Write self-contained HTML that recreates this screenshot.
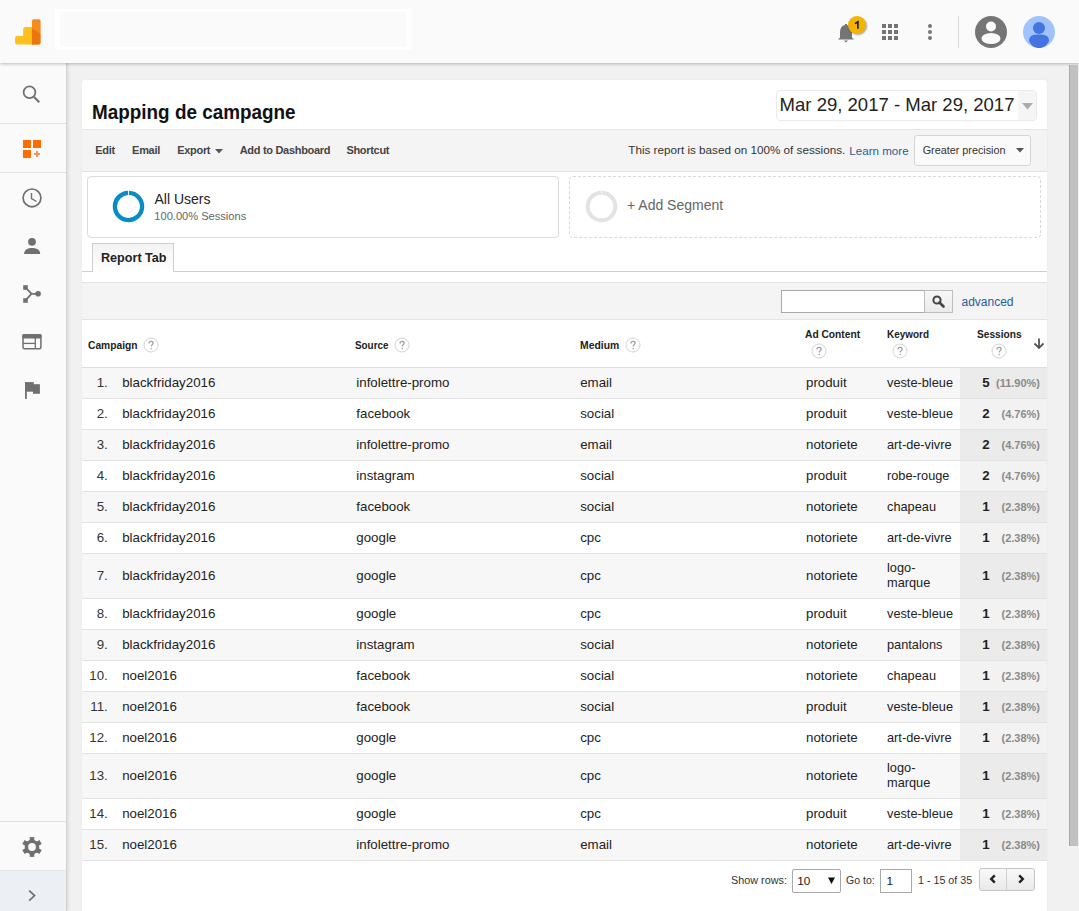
<!DOCTYPE html>
<html><head><meta charset="utf-8">
<style>
*{box-sizing:border-box;margin:0;padding:0}
html,body{width:1079px;height:911px;overflow:hidden;background:#f1f1f1;font-family:"Liberation Sans",sans-serif;color:#222}
.a{position:absolute}
#hdr{left:0;top:0;width:1079px;height:63px;background:#fafafa;box-shadow:0 1px 3px rgba(0,0,0,.25);z-index:5}
#side{left:0;top:63px;width:67px;height:848px;background:#fafafa;border-right:1px solid #d4d4d4;box-shadow:1px 0 3px rgba(0,0,0,.12);z-index:4}
#panel{left:82px;top:80px;width:965px;height:840px;background:#fff;border-radius:2px;box-shadow:0 0 1px rgba(0,0,0,.15)}
#sb{left:1069px;top:65px;width:9px;height:781px;background:#c1c1c1;border-left:1px solid #a9a9a9;z-index:6}
.t{position:absolute;white-space:nowrap}
</style></head><body>
<!-- HEADER -->
<div id="hdr" class="a">
  <svg class="a" style="left:15px;top:19px" width="26" height="26" viewBox="0 0 26 26">
    <defs><clipPath id="tb"><path d="M18.9 0.3 H23.6 Q25.6 0.3 25.6 2.3 V23.6 Q25.6 25.6 23.6 25.6 H16.9 V2.3 Q16.9 0.3 18.9 0.3Z"/></clipPath></defs>
    <path d="M2.1 16.9 H8.2 V10 Q8.2 8 10.2 8 H18 V25.6 H2.1 Q0.1 25.6 0.1 23.6 V18.9 Q0.1 16.9 2.1 16.9 Z" fill="#fdc01c"/>
    <g clip-path="url(#tb)"><rect x="16" y="0" width="11" height="27" fill="#f68b1f"/><path d="M16.9 9.2 L25.6 14.8 V26 H16.9Z" fill="#ec750f"/></g>
  </svg>
  <div class="a" style="left:55px;top:9px;width:356px;height:41px;background:#fff"></div>
  <div class="a" style="left:60px;top:12px;width:346px;height:35px;background:#fafafa"></div>

  <!-- bell -->
  <svg class="a" style="left:835px;top:20px" width="22" height="24" viewBox="0 0 22 24">
    <path d="M3 19.5 L5 17.5 V12 C5 8.3 7 5.8 10 5.1 V4 H12 V5.1 C15 5.8 17 8.3 17 12 V17.5 L19 19.5 Z" fill="#757575"/>
    <path d="M9 20.5 H13 L11 22.5 Z" fill="#757575"/>
  </svg>
  <div class="a" style="left:848px;top:16px;width:18px;height:18px;border-radius:50%;background:#f4b400;box-shadow:1px 1px 2px rgba(0,0,0,.35)"><svg class="a" style="left:0;top:0" width="18" height="18" viewBox="0 0 18 18"><path d="M7 7.6 L9.9 5.8 V12.8" fill="none" stroke="#222" stroke-width="1.7"/></svg></div>
  <!-- apps grid -->
  <svg class="a" style="left:882px;top:24px" width="16" height="16" viewBox="0 0 16 16" fill="#757575">
    <rect x="0" y="0" width="4" height="4"/><rect x="6" y="0" width="4" height="4"/><rect x="12" y="0" width="4" height="4"/>
    <rect x="0" y="6" width="4" height="4"/><rect x="6" y="6" width="4" height="4"/><rect x="12" y="6" width="4" height="4"/>
    <rect x="0" y="12" width="4" height="4"/><rect x="6" y="12" width="4" height="4"/><rect x="12" y="12" width="4" height="4"/>
  </svg>
  <!-- more vert -->
  <svg class="a" style="left:926px;top:22px" width="8" height="20" viewBox="0 0 8 20" fill="#757575">
    <circle cx="4" cy="4" r="2"/><circle cx="4" cy="10" r="2"/><circle cx="4" cy="16" r="2"/>
  </svg>
  <div class="a" style="left:958px;top:16px;width:1px;height:32px;background:#dadada"></div>
  <!-- gray avatar -->
  <svg class="a" style="left:975px;top:16px" width="32" height="32" viewBox="0 0 32 32">
    <circle cx="16" cy="16" r="16" fill="#757575"/>
    <circle cx="16" cy="10.5" r="5" fill="#fafafa"/>
    <ellipse cx="16" cy="22.5" rx="9.5" ry="5.5" fill="#fafafa"/>
  </svg>
  <!-- blue avatar -->
  <svg class="a" style="left:1023px;top:16px" width="32" height="32" viewBox="0 0 32 32">
    <circle cx="16" cy="16" r="16" fill="#a0c3ff"/>
    <circle cx="16" cy="12" r="6" fill="#4374e0"/>
    <path d="M6 25 C6 19.5 10 18.5 16 18.5 C22 18.5 26 19.5 26 25 C23.5 30 20 32 16 32 C12 32 8.5 30 6 25Z" fill="#4374e0"/>
  </svg>
</div>
<!-- SIDEBAR -->
<div id="side" class="a"></div>
<div class="a" style="left:0;top:123px;width:66px;height:1px;background:#e3e3e3;z-index:6"></div>
<div class="a" style="left:0;top:172px;width:66px;height:1px;background:#e3e3e3;z-index:6"></div>
<div class="a" style="left:0;top:821px;width:66px;height:1px;background:#e3e3e3;z-index:6"></div>
<div class="a" style="left:0;top:870px;width:66px;height:41px;background:#eceff3;border-top:1px solid #e3e3e3;z-index:6"></div>
<svg class="a" style="left:0;top:63px;z-index:7" width="66" height="848" viewBox="0 63 66 848">
  <!-- search -->
  <circle cx="29.5" cy="92.3" r="5.9" fill="none" stroke="#707070" stroke-width="1.7"/>
  <line x1="33.8" y1="96.8" x2="39.3" y2="102.3" stroke="#707070" stroke-width="2"/>
  <!-- dashboard -->
  <rect x="23" y="140" width="8" height="8" fill="#ff6d00"/>
  <rect x="33" y="140" width="8" height="8" fill="#ff6d00"/>
  <rect x="23" y="150" width="8" height="8" fill="#ff6d00"/>
  <rect x="34" y="153" width="6" height="1.8" fill="#ff8a3d"/>
  <rect x="36.1" y="151" width="1.8" height="6" fill="#ff8a3d"/>
  <!-- clock -->
  <circle cx="32" cy="197.9" r="8.9" fill="none" stroke="#707070" stroke-width="1.7"/>
  <path d="M31.5 193 V198.6 L36.5 201.5" fill="none" stroke="#707070" stroke-width="1.4"/>
  <!-- person -->
  <circle cx="32" cy="241.8" r="3.9" fill="#707070"/>
  <path d="M24.1 254 C24.1 249.5 28 248 32 248 C36 248 40.2 249.5 40.2 254 Z" fill="#707070"/>
  <!-- behavior -->
  <rect x="23.2" y="285.2" width="4.6" height="4.6" fill="#707070"/>
  <rect x="23.2" y="298.2" width="4.6" height="4.6" fill="#707070"/>
  <circle cx="38.1" cy="293.8" r="2.8" fill="#707070"/>
  <path d="M26 288 L31.5 293.8 L26 299.8 M31.5 293.8 H37" fill="none" stroke="#707070" stroke-width="1.8"/>
  <!-- window -->
  <rect x="23" y="334.8" width="17.9" height="14" rx="1.5" fill="none" stroke="#707070" stroke-width="1.5"/>
  <rect x="22.3" y="334.1" width="19.3" height="4.5" rx="1.5" fill="#707070"/>
  <line x1="23" y1="343.4" x2="35.3" y2="343.4" stroke="#707070" stroke-width="1.3"/>
  <line x1="35.3" y1="338" x2="35.3" y2="349" stroke="#707070" stroke-width="1.3"/>
  <!-- flag -->
  <rect x="25" y="382.1" width="1.8" height="16.8" fill="#707070"/>
  <rect x="25" y="382.1" width="8.8" height="9.6" fill="#707070"/>
  <rect x="33" y="384.2" width="6.9" height="9.6" fill="#707070"/>
  <!-- gear -->
  <g transform="translate(32 847)" fill="#707070">
    <circle r="7.3"/>
    <rect x="-2.3" y="-9.9" width="4.6" height="19.8"/>
    <rect x="-2.3" y="-9.9" width="4.6" height="19.8" transform="rotate(60)"/>
    <rect x="-2.3" y="-9.9" width="4.6" height="19.8" transform="rotate(120)"/>
  </g>
  <circle cx="32" cy="847" r="3.9" fill="#fafafa"/>
  <!-- chevron -->
  <path d="M29.2 890.6 L34.6 895.6 L29.2 900.6" fill="none" stroke="#707070" stroke-width="1.7"/>
</svg>
<div id="sb" class="a"></div>
<!-- PANEL -->
<div id="panel" class="a"></div>
<div class="t" style="left:91.80px;top:103.18px;font-size:19.4px;line-height:19.4px;color:#111;font-weight:bold;transform:scaleX(0.974);transform-origin:left 50%;">Mapping de campagne</div>
<div class="a" style="left:776px;top:90px;width:261px;height:31px;border:1px solid #ebebeb;border-radius:4px;background:#fff"></div>
<div class="a" style="left:1018px;top:91px;width:18px;height:29px;background:#f5f5f5;border-radius:0 3px 3px 0"></div>
<svg class="a" style="left:1022px;top:103px" width="11" height="6.5" viewBox="0 0 11 6.5"><path d="M0 0H11L5.5 6.5Z" fill="#ababab"/></svg>
<div class="t" style="left:779.60px;top:96.40px;font-size:18.55px;line-height:18.55px;color:#222;">Mar 29, 2017 - Mar 29, 2017</div>
<div class="a" style="left:82px;top:129px;width:965px;height:43px;background:#f4f4f4;border-top:1px solid #e5e5e5;border-bottom:1px solid #e2e2e2"></div>
<div class="t" style="left:95.30px;top:145.19px;font-size:11px;line-height:11px;color:#444;font-weight:bold;letter-spacing:-0.3px;">Edit</div>
<div class="t" style="left:132.10px;top:145.19px;font-size:11px;line-height:11px;color:#444;font-weight:bold;letter-spacing:-0.3px;">Email</div>
<div class="t" style="left:177.20px;top:145.19px;font-size:11px;line-height:11px;color:#444;font-weight:bold;letter-spacing:-0.3px;">Export</div>
<div class="t" style="left:239.70px;top:145.19px;font-size:11px;line-height:11px;color:#444;font-weight:bold;letter-spacing:-0.3px;">Add to Dashboard</div>
<div class="t" style="left:346.40px;top:145.19px;font-size:11px;line-height:11px;color:#444;font-weight:bold;letter-spacing:-0.3px;">Shortcut</div>
<svg class="a" style="left:214.6px;top:149px" width="8" height="4.5" viewBox="0 0 8 4.5"><path d="M0 0H8L4 4.5Z" fill="#555"/></svg>
<div class="t" style="left:628.30px;top:144.10px;font-size:11.7px;line-height:11.7px;color:#333;">This report is based on 100% of sessions.</div>
<div class="t" style="left:849.30px;top:145.18px;font-size:11.6px;line-height:11.6px;color:#2a5b9c;">Learn more</div>
<div class="a" style="left:914px;top:135px;width:117px;height:31px;background:#fafafa;border:1px solid #d5d5d5;border-radius:3px"></div>
<div class="t" style="left:922.70px;top:145.36px;font-size:10.8px;line-height:10.8px;color:#333;">Greater precision</div>
<svg class="a" style="left:1015.5px;top:148px" width="8" height="4.5" viewBox="0 0 8 4.5"><path d="M0 0H8L4 4.5Z" fill="#555"/></svg>
<div class="a" style="left:87px;top:176px;width:472px;height:62px;border:1px solid #dcdcdc;border-radius:4px;background:#fff"></div>
<svg class="a" style="left:112px;top:190px" width="33" height="33" viewBox="0 0 33 33"><circle cx="16.5" cy="16.5" r="13.6" fill="none" stroke="#078cc6" stroke-width="4.3" stroke-dasharray="84 1.2" transform="rotate(-88 16.5 16.5)"/></svg>
<div class="t" style="left:154.50px;top:192.25px;font-size:14px;line-height:14px;color:#222;">All Users</div>
<div class="t" style="left:154.30px;top:211.40px;font-size:11.1px;line-height:11.1px;color:#666;">100.00% Sessions</div>
<div class="a" style="left:569px;top:176px;width:472px;height:62px;border:1px dashed #d9d9d9;border-radius:4px;background:#fff"></div>
<svg class="a" style="left:585px;top:190px" width="33" height="33" viewBox="0 0 33 33"><circle cx="16.5" cy="16.5" r="13.8" fill="none" stroke="#e3e3e3" stroke-width="4" stroke-dasharray="85.5 1.2" transform="rotate(-88 16.5 16.5)"/></svg>
<div class="t" style="left:627.00px;top:197.85px;font-size:14px;line-height:14px;color:#666;">+ Add Segment</div>
<div class="a" style="left:82px;top:271px;width:965px;height:1px;background:#cfcfcf"></div>
<div class="a" style="left:92px;top:243px;width:82px;height:29px;background:linear-gradient(#f3f3f3,#fff);border:1px solid #cfcfcf;border-bottom:none"></div>
<div class="t" style="left:101.00px;top:251.93px;font-size:12.6px;line-height:12.6px;color:#222;font-weight:bold;">Report Tab</div>
<div class="a" style="left:82px;top:282px;width:965px;height:38px;background:#f4f4f4;border-top:1px solid #e3e3e3;border-bottom:1px solid #e3e3e3"></div>
<div class="a" style="left:781px;top:290px;width:144px;height:23px;background:#fff;border:1px solid #a9a9a9;border-right:none"></div>
<div class="a" style="left:924px;top:290px;width:28.5px;height:23px;background:linear-gradient(#f7f7f7,#ebebeb);border:1px solid #bdbdbd"></div>
<svg class="a" style="left:932px;top:295px" width="13" height="13" viewBox="0 0 13 13"><circle cx="5" cy="5" r="3.6" fill="none" stroke="#444" stroke-width="2"/><path d="M7.5 7.5L11.5 11.5" stroke="#444" stroke-width="2.6" stroke-linecap="round"/></svg>
<div class="t" style="left:961.50px;top:296.34px;font-size:12px;line-height:12px;color:#2a5b9c;">advanced</div>
<div class="a" style="left:82px;top:320px;width:965px;height:48px;background:#fff;border-bottom:1px solid #dedede"></div>
<div class="t" style="left:88.30px;top:339.89px;font-size:11px;line-height:11px;color:#222;font-weight:bold;transform:scaleX(0.9307);transform-origin:left 50%;">Campaign</div>
<svg class="a" style="left:143.4px;top:336.7px" width="16" height="16" viewBox="0 0 16 16"><circle cx="8" cy="8" r="7" fill="#fff" stroke="#d4d4d4" stroke-width="1"/><path d="M6 6.4 C6 5.1 6.9 4.4 8 4.4 C9.1 4.4 10.1 5.1 10.1 6.2 C10.1 7.6 8.2 7.8 8.2 9.6" fill="none" stroke="#9e9e9e" stroke-width="1.25"/><circle cx="8.2" cy="11.4" r="0.75" fill="#9e9e9e"/></svg>
<div class="t" style="left:355.40px;top:339.89px;font-size:11px;line-height:11px;color:#222;font-weight:bold;transform:scaleX(0.8978);transform-origin:left 50%;">Source</div>
<svg class="a" style="left:394.3px;top:336.7px" width="16" height="16" viewBox="0 0 16 16"><circle cx="8" cy="8" r="7" fill="#fff" stroke="#d4d4d4" stroke-width="1"/><path d="M6 6.4 C6 5.1 6.9 4.4 8 4.4 C9.1 4.4 10.1 5.1 10.1 6.2 C10.1 7.6 8.2 7.8 8.2 9.6" fill="none" stroke="#9e9e9e" stroke-width="1.25"/><circle cx="8.2" cy="11.4" r="0.75" fill="#9e9e9e"/></svg>
<div class="t" style="left:579.60px;top:339.89px;font-size:11px;line-height:11px;color:#222;font-weight:bold;transform:scaleX(0.9432);transform-origin:left 50%;">Medium</div>
<svg class="a" style="left:624.7px;top:336.7px" width="16" height="16" viewBox="0 0 16 16"><circle cx="8" cy="8" r="7" fill="#fff" stroke="#d4d4d4" stroke-width="1"/><path d="M6 6.4 C6 5.1 6.9 4.4 8 4.4 C9.1 4.4 10.1 5.1 10.1 6.2 C10.1 7.6 8.2 7.8 8.2 9.6" fill="none" stroke="#9e9e9e" stroke-width="1.25"/><circle cx="8.2" cy="11.4" r="0.75" fill="#9e9e9e"/></svg>
<div class="t" style="left:804.90px;top:328.89px;font-size:11px;line-height:11px;color:#222;font-weight:bold;transform:scaleX(0.9300);transform-origin:left 50%;">Ad Content</div>
<svg class="a" style="left:810.6px;top:343.4px" width="16" height="16" viewBox="0 0 16 16"><circle cx="8" cy="8" r="7" fill="#fff" stroke="#d4d4d4" stroke-width="1"/><path d="M6 6.4 C6 5.1 6.9 4.4 8 4.4 C9.1 4.4 10.1 5.1 10.1 6.2 C10.1 7.6 8.2 7.8 8.2 9.6" fill="none" stroke="#9e9e9e" stroke-width="1.25"/><circle cx="8.2" cy="11.4" r="0.75" fill="#9e9e9e"/></svg>
<div class="t" style="left:886.50px;top:328.89px;font-size:11px;line-height:11px;color:#222;font-weight:bold;transform:scaleX(0.9038);transform-origin:left 50%;">Keyword</div>
<svg class="a" style="left:891.5px;top:343.4px" width="16" height="16" viewBox="0 0 16 16"><circle cx="8" cy="8" r="7" fill="#fff" stroke="#d4d4d4" stroke-width="1"/><path d="M6 6.4 C6 5.1 6.9 4.4 8 4.4 C9.1 4.4 10.1 5.1 10.1 6.2 C10.1 7.6 8.2 7.8 8.2 9.6" fill="none" stroke="#9e9e9e" stroke-width="1.25"/><circle cx="8.2" cy="11.4" r="0.75" fill="#9e9e9e"/></svg>
<div class="t" style="left:976.50px;top:328.89px;font-size:11px;line-height:11px;color:#222;font-weight:bold;transform:scaleX(0.9246);transform-origin:left 50%;">Sessions</div>
<svg class="a" style="left:991.4px;top:343.4px" width="16" height="16" viewBox="0 0 16 16"><circle cx="8" cy="8" r="7" fill="#fff" stroke="#d4d4d4" stroke-width="1"/><path d="M6 6.4 C6 5.1 6.9 4.4 8 4.4 C9.1 4.4 10.1 5.1 10.1 6.2 C10.1 7.6 8.2 7.8 8.2 9.6" fill="none" stroke="#9e9e9e" stroke-width="1.25"/><circle cx="8.2" cy="11.4" r="0.75" fill="#9e9e9e"/></svg>
<svg class="a" style="left:1033px;top:338px" width="12" height="11" viewBox="0 0 12 11"><path d="M6 0.5V10 M1.5 5.5L6 10L10.5 5.5" fill="none" stroke="#555" stroke-width="1.8"/></svg>
<div class="a" style="left:82px;top:368px;width:965px;height:31px;background:#f7f7f7;border-bottom:1px solid #e2e2e2"></div>
<div class="a" style="left:960px;top:368px;width:87px;height:30px;background:#ebebeb"></div>
<div class="t" style="right:971.20px;top:375.94px;font-size:13.3px;line-height:13.3px;color:#333;">1.</div>
<div class="t" style="left:122.20px;top:375.94px;font-size:13.3px;line-height:13.3px;color:#222;">blackfriday2016</div>
<div class="t" style="left:356.30px;top:375.94px;font-size:13.3px;line-height:13.3px;color:#222;">infolettre-promo</div>
<div class="t" style="left:580.20px;top:375.94px;font-size:13.3px;line-height:13.3px;color:#222;">email</div>
<div class="t" style="left:806.00px;top:375.94px;font-size:13.3px;line-height:13.3px;color:#222;">produit</div>
<div class="t" style="left:887.20px;top:375.94px;font-size:13.3px;line-height:13.3px;color:#222;transform:scaleX(0.96);transform-origin:left 50%;">veste-bleue</div>
<div class="t" style="right:89.40px;top:375.94px;font-size:13.3px;line-height:13.3px;color:#222;font-weight:bold;">5</div>
<div class="t" style="right:39.00px;top:377.89px;font-size:11px;line-height:11px;color:#8a8a8a;font-weight:bold;">(11.90%)</div>
<div class="a" style="left:82px;top:399px;width:965px;height:31px;background:#fff;border-bottom:1px solid #e2e2e2"></div>
<div class="a" style="left:960px;top:399px;width:87px;height:30px;background:#f2f2f2"></div>
<div class="t" style="right:971.20px;top:406.94px;font-size:13.3px;line-height:13.3px;color:#333;">2.</div>
<div class="t" style="left:122.20px;top:406.94px;font-size:13.3px;line-height:13.3px;color:#222;">blackfriday2016</div>
<div class="t" style="left:356.30px;top:406.94px;font-size:13.3px;line-height:13.3px;color:#222;">facebook</div>
<div class="t" style="left:580.20px;top:406.94px;font-size:13.3px;line-height:13.3px;color:#222;">social</div>
<div class="t" style="left:806.00px;top:406.94px;font-size:13.3px;line-height:13.3px;color:#222;">produit</div>
<div class="t" style="left:887.20px;top:406.94px;font-size:13.3px;line-height:13.3px;color:#222;transform:scaleX(0.96);transform-origin:left 50%;">veste-bleue</div>
<div class="t" style="right:89.40px;top:406.94px;font-size:13.3px;line-height:13.3px;color:#222;font-weight:bold;">2</div>
<div class="t" style="right:39.00px;top:408.89px;font-size:11px;line-height:11px;color:#8a8a8a;font-weight:bold;">(4.76%)</div>
<div class="a" style="left:82px;top:430px;width:965px;height:31px;background:#f7f7f7;border-bottom:1px solid #e2e2e2"></div>
<div class="a" style="left:960px;top:430px;width:87px;height:30px;background:#ebebeb"></div>
<div class="t" style="right:971.20px;top:437.94px;font-size:13.3px;line-height:13.3px;color:#333;">3.</div>
<div class="t" style="left:122.20px;top:437.94px;font-size:13.3px;line-height:13.3px;color:#222;">blackfriday2016</div>
<div class="t" style="left:356.30px;top:437.94px;font-size:13.3px;line-height:13.3px;color:#222;">infolettre-promo</div>
<div class="t" style="left:580.20px;top:437.94px;font-size:13.3px;line-height:13.3px;color:#222;">email</div>
<div class="t" style="left:806.00px;top:437.94px;font-size:13.3px;line-height:13.3px;color:#222;">notoriete</div>
<div class="t" style="left:887.20px;top:437.94px;font-size:13.3px;line-height:13.3px;color:#222;transform:scaleX(0.96);transform-origin:left 50%;">art-de-vivre</div>
<div class="t" style="right:89.40px;top:437.94px;font-size:13.3px;line-height:13.3px;color:#222;font-weight:bold;">2</div>
<div class="t" style="right:39.00px;top:439.89px;font-size:11px;line-height:11px;color:#8a8a8a;font-weight:bold;">(4.76%)</div>
<div class="a" style="left:82px;top:461px;width:965px;height:31px;background:#fff;border-bottom:1px solid #e2e2e2"></div>
<div class="a" style="left:960px;top:461px;width:87px;height:30px;background:#f2f2f2"></div>
<div class="t" style="right:971.20px;top:468.94px;font-size:13.3px;line-height:13.3px;color:#333;">4.</div>
<div class="t" style="left:122.20px;top:468.94px;font-size:13.3px;line-height:13.3px;color:#222;">blackfriday2016</div>
<div class="t" style="left:356.30px;top:468.94px;font-size:13.3px;line-height:13.3px;color:#222;">instagram</div>
<div class="t" style="left:580.20px;top:468.94px;font-size:13.3px;line-height:13.3px;color:#222;">social</div>
<div class="t" style="left:806.00px;top:468.94px;font-size:13.3px;line-height:13.3px;color:#222;">produit</div>
<div class="t" style="left:887.20px;top:468.94px;font-size:13.3px;line-height:13.3px;color:#222;transform:scaleX(0.96);transform-origin:left 50%;">robe-rouge</div>
<div class="t" style="right:89.40px;top:468.94px;font-size:13.3px;line-height:13.3px;color:#222;font-weight:bold;">2</div>
<div class="t" style="right:39.00px;top:470.89px;font-size:11px;line-height:11px;color:#8a8a8a;font-weight:bold;">(4.76%)</div>
<div class="a" style="left:82px;top:492px;width:965px;height:31px;background:#f7f7f7;border-bottom:1px solid #e2e2e2"></div>
<div class="a" style="left:960px;top:492px;width:87px;height:30px;background:#ebebeb"></div>
<div class="t" style="right:971.20px;top:499.94px;font-size:13.3px;line-height:13.3px;color:#333;">5.</div>
<div class="t" style="left:122.20px;top:499.94px;font-size:13.3px;line-height:13.3px;color:#222;">blackfriday2016</div>
<div class="t" style="left:356.30px;top:499.94px;font-size:13.3px;line-height:13.3px;color:#222;">facebook</div>
<div class="t" style="left:580.20px;top:499.94px;font-size:13.3px;line-height:13.3px;color:#222;">social</div>
<div class="t" style="left:806.00px;top:499.94px;font-size:13.3px;line-height:13.3px;color:#222;">notoriete</div>
<div class="t" style="left:887.20px;top:499.94px;font-size:13.3px;line-height:13.3px;color:#222;transform:scaleX(0.96);transform-origin:left 50%;">chapeau</div>
<div class="t" style="right:89.40px;top:499.94px;font-size:13.3px;line-height:13.3px;color:#222;font-weight:bold;">1</div>
<div class="t" style="right:39.00px;top:501.89px;font-size:11px;line-height:11px;color:#8a8a8a;font-weight:bold;">(2.38%)</div>
<div class="a" style="left:82px;top:523px;width:965px;height:31px;background:#fff;border-bottom:1px solid #e2e2e2"></div>
<div class="a" style="left:960px;top:523px;width:87px;height:30px;background:#f2f2f2"></div>
<div class="t" style="right:971.20px;top:530.94px;font-size:13.3px;line-height:13.3px;color:#333;">6.</div>
<div class="t" style="left:122.20px;top:530.94px;font-size:13.3px;line-height:13.3px;color:#222;">blackfriday2016</div>
<div class="t" style="left:356.30px;top:530.94px;font-size:13.3px;line-height:13.3px;color:#222;">google</div>
<div class="t" style="left:580.20px;top:530.94px;font-size:13.3px;line-height:13.3px;color:#222;">cpc</div>
<div class="t" style="left:806.00px;top:530.94px;font-size:13.3px;line-height:13.3px;color:#222;">notoriete</div>
<div class="t" style="left:887.20px;top:530.94px;font-size:13.3px;line-height:13.3px;color:#222;transform:scaleX(0.96);transform-origin:left 50%;">art-de-vivre</div>
<div class="t" style="right:89.40px;top:530.94px;font-size:13.3px;line-height:13.3px;color:#222;font-weight:bold;">1</div>
<div class="t" style="right:39.00px;top:532.89px;font-size:11px;line-height:11px;color:#8a8a8a;font-weight:bold;">(2.38%)</div>
<div class="a" style="left:82px;top:554px;width:965px;height:45px;background:#f7f7f7;border-bottom:1px solid #e2e2e2"></div>
<div class="a" style="left:960px;top:554px;width:87px;height:44px;background:#ebebeb"></div>
<div class="t" style="right:971.20px;top:568.94px;font-size:13.3px;line-height:13.3px;color:#333;">7.</div>
<div class="t" style="left:122.20px;top:568.94px;font-size:13.3px;line-height:13.3px;color:#222;">blackfriday2016</div>
<div class="t" style="left:356.30px;top:568.94px;font-size:13.3px;line-height:13.3px;color:#222;">google</div>
<div class="t" style="left:580.20px;top:568.94px;font-size:13.3px;line-height:13.3px;color:#222;">cpc</div>
<div class="t" style="left:806.00px;top:568.94px;font-size:13.3px;line-height:13.3px;color:#222;">notoriete</div>
<div class="t" style="left:887.20px;top:561.44px;font-size:13.3px;line-height:13.3px;color:#222;transform:scaleX(0.96);transform-origin:left 50%;">logo-</div>
<div class="t" style="left:887.20px;top:576.44px;font-size:13.3px;line-height:13.3px;color:#222;transform:scaleX(0.96);transform-origin:left 50%;">marque</div>
<div class="t" style="right:89.40px;top:568.94px;font-size:13.3px;line-height:13.3px;color:#222;font-weight:bold;">1</div>
<div class="t" style="right:39.00px;top:570.89px;font-size:11px;line-height:11px;color:#8a8a8a;font-weight:bold;">(2.38%)</div>
<div class="a" style="left:82px;top:599px;width:965px;height:31px;background:#fff;border-bottom:1px solid #e2e2e2"></div>
<div class="a" style="left:960px;top:599px;width:87px;height:30px;background:#f2f2f2"></div>
<div class="t" style="right:971.20px;top:606.94px;font-size:13.3px;line-height:13.3px;color:#333;">8.</div>
<div class="t" style="left:122.20px;top:606.94px;font-size:13.3px;line-height:13.3px;color:#222;">blackfriday2016</div>
<div class="t" style="left:356.30px;top:606.94px;font-size:13.3px;line-height:13.3px;color:#222;">google</div>
<div class="t" style="left:580.20px;top:606.94px;font-size:13.3px;line-height:13.3px;color:#222;">cpc</div>
<div class="t" style="left:806.00px;top:606.94px;font-size:13.3px;line-height:13.3px;color:#222;">produit</div>
<div class="t" style="left:887.20px;top:606.94px;font-size:13.3px;line-height:13.3px;color:#222;transform:scaleX(0.96);transform-origin:left 50%;">veste-bleue</div>
<div class="t" style="right:89.40px;top:606.94px;font-size:13.3px;line-height:13.3px;color:#222;font-weight:bold;">1</div>
<div class="t" style="right:39.00px;top:608.89px;font-size:11px;line-height:11px;color:#8a8a8a;font-weight:bold;">(2.38%)</div>
<div class="a" style="left:82px;top:630px;width:965px;height:31px;background:#f7f7f7;border-bottom:1px solid #e2e2e2"></div>
<div class="a" style="left:960px;top:630px;width:87px;height:30px;background:#ebebeb"></div>
<div class="t" style="right:971.20px;top:637.94px;font-size:13.3px;line-height:13.3px;color:#333;">9.</div>
<div class="t" style="left:122.20px;top:637.94px;font-size:13.3px;line-height:13.3px;color:#222;">blackfriday2016</div>
<div class="t" style="left:356.30px;top:637.94px;font-size:13.3px;line-height:13.3px;color:#222;">instagram</div>
<div class="t" style="left:580.20px;top:637.94px;font-size:13.3px;line-height:13.3px;color:#222;">social</div>
<div class="t" style="left:806.00px;top:637.94px;font-size:13.3px;line-height:13.3px;color:#222;">notoriete</div>
<div class="t" style="left:887.20px;top:637.94px;font-size:13.3px;line-height:13.3px;color:#222;transform:scaleX(0.96);transform-origin:left 50%;">pantalons</div>
<div class="t" style="right:89.40px;top:637.94px;font-size:13.3px;line-height:13.3px;color:#222;font-weight:bold;">1</div>
<div class="t" style="right:39.00px;top:639.89px;font-size:11px;line-height:11px;color:#8a8a8a;font-weight:bold;">(2.38%)</div>
<div class="a" style="left:82px;top:661px;width:965px;height:31px;background:#fff;border-bottom:1px solid #e2e2e2"></div>
<div class="a" style="left:960px;top:661px;width:87px;height:30px;background:#f2f2f2"></div>
<div class="t" style="right:971.20px;top:668.94px;font-size:13.3px;line-height:13.3px;color:#333;">10.</div>
<div class="t" style="left:122.20px;top:668.94px;font-size:13.3px;line-height:13.3px;color:#222;">noel2016</div>
<div class="t" style="left:356.30px;top:668.94px;font-size:13.3px;line-height:13.3px;color:#222;">facebook</div>
<div class="t" style="left:580.20px;top:668.94px;font-size:13.3px;line-height:13.3px;color:#222;">social</div>
<div class="t" style="left:806.00px;top:668.94px;font-size:13.3px;line-height:13.3px;color:#222;">notoriete</div>
<div class="t" style="left:887.20px;top:668.94px;font-size:13.3px;line-height:13.3px;color:#222;transform:scaleX(0.96);transform-origin:left 50%;">chapeau</div>
<div class="t" style="right:89.40px;top:668.94px;font-size:13.3px;line-height:13.3px;color:#222;font-weight:bold;">1</div>
<div class="t" style="right:39.00px;top:670.89px;font-size:11px;line-height:11px;color:#8a8a8a;font-weight:bold;">(2.38%)</div>
<div class="a" style="left:82px;top:692px;width:965px;height:31px;background:#f7f7f7;border-bottom:1px solid #e2e2e2"></div>
<div class="a" style="left:960px;top:692px;width:87px;height:30px;background:#ebebeb"></div>
<div class="t" style="right:971.20px;top:699.94px;font-size:13.3px;line-height:13.3px;color:#333;">11.</div>
<div class="t" style="left:122.20px;top:699.94px;font-size:13.3px;line-height:13.3px;color:#222;">noel2016</div>
<div class="t" style="left:356.30px;top:699.94px;font-size:13.3px;line-height:13.3px;color:#222;">facebook</div>
<div class="t" style="left:580.20px;top:699.94px;font-size:13.3px;line-height:13.3px;color:#222;">social</div>
<div class="t" style="left:806.00px;top:699.94px;font-size:13.3px;line-height:13.3px;color:#222;">produit</div>
<div class="t" style="left:887.20px;top:699.94px;font-size:13.3px;line-height:13.3px;color:#222;transform:scaleX(0.96);transform-origin:left 50%;">veste-bleue</div>
<div class="t" style="right:89.40px;top:699.94px;font-size:13.3px;line-height:13.3px;color:#222;font-weight:bold;">1</div>
<div class="t" style="right:39.00px;top:701.89px;font-size:11px;line-height:11px;color:#8a8a8a;font-weight:bold;">(2.38%)</div>
<div class="a" style="left:82px;top:723px;width:965px;height:31px;background:#fff;border-bottom:1px solid #e2e2e2"></div>
<div class="a" style="left:960px;top:723px;width:87px;height:30px;background:#f2f2f2"></div>
<div class="t" style="right:971.20px;top:730.94px;font-size:13.3px;line-height:13.3px;color:#333;">12.</div>
<div class="t" style="left:122.20px;top:730.94px;font-size:13.3px;line-height:13.3px;color:#222;">noel2016</div>
<div class="t" style="left:356.30px;top:730.94px;font-size:13.3px;line-height:13.3px;color:#222;">google</div>
<div class="t" style="left:580.20px;top:730.94px;font-size:13.3px;line-height:13.3px;color:#222;">cpc</div>
<div class="t" style="left:806.00px;top:730.94px;font-size:13.3px;line-height:13.3px;color:#222;">notoriete</div>
<div class="t" style="left:887.20px;top:730.94px;font-size:13.3px;line-height:13.3px;color:#222;transform:scaleX(0.96);transform-origin:left 50%;">art-de-vivre</div>
<div class="t" style="right:89.40px;top:730.94px;font-size:13.3px;line-height:13.3px;color:#222;font-weight:bold;">1</div>
<div class="t" style="right:39.00px;top:732.89px;font-size:11px;line-height:11px;color:#8a8a8a;font-weight:bold;">(2.38%)</div>
<div class="a" style="left:82px;top:754px;width:965px;height:45px;background:#f7f7f7;border-bottom:1px solid #e2e2e2"></div>
<div class="a" style="left:960px;top:754px;width:87px;height:44px;background:#ebebeb"></div>
<div class="t" style="right:971.20px;top:768.94px;font-size:13.3px;line-height:13.3px;color:#333;">13.</div>
<div class="t" style="left:122.20px;top:768.94px;font-size:13.3px;line-height:13.3px;color:#222;">noel2016</div>
<div class="t" style="left:356.30px;top:768.94px;font-size:13.3px;line-height:13.3px;color:#222;">google</div>
<div class="t" style="left:580.20px;top:768.94px;font-size:13.3px;line-height:13.3px;color:#222;">cpc</div>
<div class="t" style="left:806.00px;top:768.94px;font-size:13.3px;line-height:13.3px;color:#222;">notoriete</div>
<div class="t" style="left:887.20px;top:761.44px;font-size:13.3px;line-height:13.3px;color:#222;transform:scaleX(0.96);transform-origin:left 50%;">logo-</div>
<div class="t" style="left:887.20px;top:776.44px;font-size:13.3px;line-height:13.3px;color:#222;transform:scaleX(0.96);transform-origin:left 50%;">marque</div>
<div class="t" style="right:89.40px;top:768.94px;font-size:13.3px;line-height:13.3px;color:#222;font-weight:bold;">1</div>
<div class="t" style="right:39.00px;top:770.89px;font-size:11px;line-height:11px;color:#8a8a8a;font-weight:bold;">(2.38%)</div>
<div class="a" style="left:82px;top:799px;width:965px;height:31px;background:#fff;border-bottom:1px solid #e2e2e2"></div>
<div class="a" style="left:960px;top:799px;width:87px;height:30px;background:#f2f2f2"></div>
<div class="t" style="right:971.20px;top:806.94px;font-size:13.3px;line-height:13.3px;color:#333;">14.</div>
<div class="t" style="left:122.20px;top:806.94px;font-size:13.3px;line-height:13.3px;color:#222;">noel2016</div>
<div class="t" style="left:356.30px;top:806.94px;font-size:13.3px;line-height:13.3px;color:#222;">google</div>
<div class="t" style="left:580.20px;top:806.94px;font-size:13.3px;line-height:13.3px;color:#222;">cpc</div>
<div class="t" style="left:806.00px;top:806.94px;font-size:13.3px;line-height:13.3px;color:#222;">produit</div>
<div class="t" style="left:887.20px;top:806.94px;font-size:13.3px;line-height:13.3px;color:#222;transform:scaleX(0.96);transform-origin:left 50%;">veste-bleue</div>
<div class="t" style="right:89.40px;top:806.94px;font-size:13.3px;line-height:13.3px;color:#222;font-weight:bold;">1</div>
<div class="t" style="right:39.00px;top:808.89px;font-size:11px;line-height:11px;color:#8a8a8a;font-weight:bold;">(2.38%)</div>
<div class="a" style="left:82px;top:830px;width:965px;height:31px;background:#f7f7f7;border-bottom:1px solid #e2e2e2"></div>
<div class="a" style="left:960px;top:830px;width:87px;height:30px;background:#ebebeb"></div>
<div class="t" style="right:971.20px;top:837.94px;font-size:13.3px;line-height:13.3px;color:#333;">15.</div>
<div class="t" style="left:122.20px;top:837.94px;font-size:13.3px;line-height:13.3px;color:#222;">noel2016</div>
<div class="t" style="left:356.30px;top:837.94px;font-size:13.3px;line-height:13.3px;color:#222;">infolettre-promo</div>
<div class="t" style="left:580.20px;top:837.94px;font-size:13.3px;line-height:13.3px;color:#222;">email</div>
<div class="t" style="left:806.00px;top:837.94px;font-size:13.3px;line-height:13.3px;color:#222;">notoriete</div>
<div class="t" style="left:887.20px;top:837.94px;font-size:13.3px;line-height:13.3px;color:#222;transform:scaleX(0.96);transform-origin:left 50%;">art-de-vivre</div>
<div class="t" style="right:89.40px;top:837.94px;font-size:13.3px;line-height:13.3px;color:#222;font-weight:bold;">1</div>
<div class="t" style="right:39.00px;top:839.89px;font-size:11px;line-height:11px;color:#8a8a8a;font-weight:bold;">(2.38%)</div>
<div class="t" style="left:730.80px;top:874.89px;font-size:11px;line-height:11px;color:#333;transform:scaleX(0.9829);transform-origin:left 50%;">Show rows:</div>
<div class="a" style="left:792px;top:869px;width:48.5px;height:24px;background:#fff;border:1px solid #a9a9a9;border-radius:2px"></div>
<div class="t" style="left:797.30px;top:875.61px;font-size:11.8px;line-height:11.8px;color:#222;">10</div>
<svg class="a" style="left:828px;top:877px" width="7" height="7" viewBox="0 0 7 7"><path d="M0 0.5H7L3.5 7Z" fill="#111"/></svg>
<div class="t" style="left:846.30px;top:874.89px;font-size:11px;line-height:11px;color:#333;transform:scaleX(0.9567);transform-origin:left 50%;">Go to:</div>
<div class="a" style="left:880px;top:869px;width:32px;height:24px;background:#fff;border:1px solid #a9a9a9"></div>
<div class="t" style="left:886.40px;top:875.61px;font-size:11.8px;line-height:11.8px;color:#222;">1</div>
<div class="t" style="left:917.50px;top:874.30px;font-size:11.7px;line-height:11.7px;color:#333;transform:scaleX(0.9165);transform-origin:left 50%;">1 - 15 of 35</div>
<div class="a" style="left:979px;top:868px;width:56px;height:23px;background:linear-gradient(#f9f9f9,#e9e9e9);border:1px solid #c6c6c6;border-radius:3px"></div>
<div class="a" style="left:1006px;top:869px;width:1px;height:21px;background:#d0d0d0"></div>
<svg class="a" style="left:988px;top:874px" width="10" height="10" viewBox="0 0 10 10"><path d="M6.8 1.3L3.2 5L6.8 8.7" fill="none" stroke="#222" stroke-width="2.4"/></svg>
<svg class="a" style="left:1016px;top:874px" width="10" height="10" viewBox="0 0 10 10"><path d="M3.2 1.3L6.8 5L3.2 8.7" fill="none" stroke="#222" stroke-width="2.4"/></svg>
</body></html>
